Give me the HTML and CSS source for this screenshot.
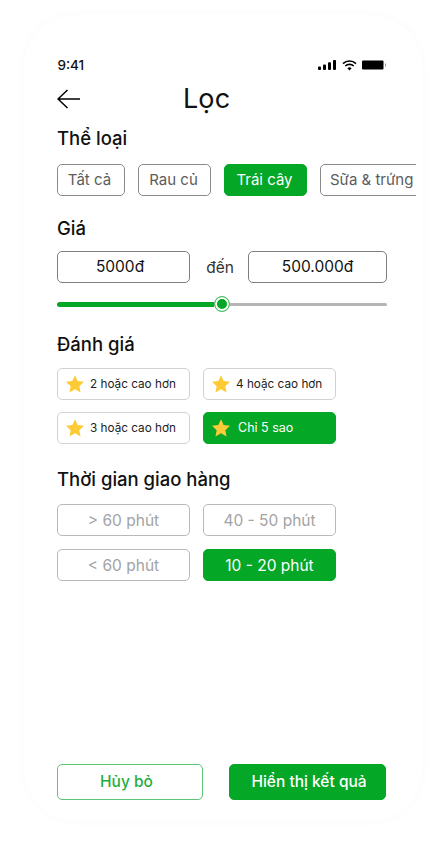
FILE: index.html
```html
<!DOCTYPE html>
<html lang="vi">
<head>
    <meta charset="UTF-8">
    <meta name="viewport" content="width=device-width, initial-scale=1.0">
    <title>Lọc</title>
    <link rel="stylesheet" href="styles.css">
</head>
<body>
    <div class="phone">
        <div class="status-bar">
            <span class="time">9:41</span>
            <div class="status-icons">
                <svg width="18" height="10" viewBox="0 0 18 10"><rect x="0" y="6.5" width="3" height="3.5" rx="1"/><rect x="5" y="4.5" width="3" height="5.5" rx="1"/><rect x="10" y="2.2" width="3" height="7.8" rx="1"/><rect x="15" y="0" width="3" height="10" rx="1"/></svg>
                <svg width="15" height="11" viewBox="0 0 15 11"><path d="M1 3.6a9.4 9.4 0 0 1 13 0" fill="none" stroke="#000" stroke-width="1.7"/><path d="M3.3 6a6 6 0 0 1 8.4 0" fill="none" stroke="#000" stroke-width="1.7"/><path d="M7.5 10.6 5.4 8.2a3 3 0 0 1 4.2 0z"/></svg>
                <svg width="24" height="10" viewBox="0 0 24 10"><rect x="0" y="0.5" width="21.5" height="9" rx="1"/><rect x="23" y="3.5" width="1" height="3" fill="#999"/></svg>
            </div>
        </div>

        <div class="header">
            <svg class="back" width="24" height="20" viewBox="0 0 24 20"><path d="M23 10H1M10.5 1 1 10l9.5 9" fill="none" stroke="#000" stroke-width="1.5"/></svg>
            <h1>Lọc</h1>
        </div>

        <h2 class="first">Thể loại</h2>
        <div class="chips">
            <div class="chip chip-all">Tất cả</div>
            <div class="chip chip-veg">Rau củ</div>
            <div class="chip chip-fruit active">Trái cây</div>
            <div class="chip chip-milk">Sữa &amp; trứng</div>
        </div>

        <h2 class="price-title">Giá</h2>
        <div class="price-row">
            <div class="price-box">5000đ</div>
            <span class="to">đến</span>
            <div class="price-box wide">500.000đ</div>
        </div>
        <div class="slider">
            <div class="slider-fill"></div>
            <div class="slider-thumb"></div>
            <div class="slider-rest"></div>
        </div>

        <h2 class="rating-title">Đánh giá</h2>
        <div class="option-grid">
            <div class="option rating"><svg class="star" viewBox="0 0 24 24"><path d="M12 1.5l3.2 7 7.6.9-5.6 5.2 1.5 7.5L12 18.3l-6.7 3.8 1.5-7.5L1.2 9.4l7.6-.9z"/></svg>2 hoặc cao hơn</div>
            <div class="option rating"><svg class="star" viewBox="0 0 24 24"><path d="M12 1.5l3.2 7 7.6.9-5.6 5.2 1.5 7.5L12 18.3l-6.7 3.8 1.5-7.5L1.2 9.4l7.6-.9z"/></svg>4 hoặc cao hơn</div>
            <div class="option rating"><svg class="star" viewBox="0 0 24 24"><path d="M12 1.5l3.2 7 7.6.9-5.6 5.2 1.5 7.5L12 18.3l-6.7 3.8 1.5-7.5L1.2 9.4l7.6-.9z"/></svg>3 hoặc cao hơn</div>
            <div class="option rating selected"><svg class="star" viewBox="0 0 24 24"><path d="M12 1.5l3.2 7 7.6.9-5.6 5.2 1.5 7.5L12 18.3l-6.7 3.8 1.5-7.5L1.2 9.4l7.6-.9z"/></svg><span class="five">Chỉ 5 sao</span></div>
        </div>

        <h2 class="delivery-title">Thời gian giao hàng</h2>
        <div class="option-grid time-grid">
            <div class="option time-option">&gt; 60 phút</div>
            <div class="option time-option">40 - 50 phút</div>
            <div class="option time-option">&lt; 60 phút</div>
            <div class="option time-option selected">10 - 20 phút</div>
        </div>

        <div class="footer">
            <div class="btn cancel">Hủy bỏ</div>
            <div class="btn apply">Hiển thị kết quả</div>
        </div>
    </div>
</body>
</html>
```

FILE: styles.css
```css
* {
    box-sizing: border-box;
}
html, body {
    margin: 0;
    height: 100%;
}
body {
    background: #ffffff;
    font-family: Inter, "Noto Sans", sans-serif;
    color: #111111;
    padding: 15px 24px 0;
    overflow: hidden;
}
.phone {
    height: 806px;
    padding: 0 0 21px 33px;
    border-radius: 52px;
    background: #ffffff;
    box-shadow: 0 0 12px rgba(0, 0, 0, 0.025);
    display: flex;
    flex-direction: column;
}
.status-bar {
    width: 330px;
    margin-top: 42px;
    height: 16px;
    display: flex;
    justify-content: space-between;
    align-items: center;
}
.time {
    font-size: 13.5px;
    font-weight: 500;
    padding-left: 0.5px;
}
.status-icons {
    display: flex;
    align-items: center;
    gap: 5.5px;
    margin-right: 1px;
}
.header {
    display: flex;
    align-items: center;
    height: 36px;
    margin-top: 7px;
}
.back {
    flex: none;
    margin-top: 2px;
}
h1 {
    margin: 0 0 0 102px;
    font-size: 27px;
    font-weight: 400;
    letter-spacing: 0.1px;
}
h2 {
    margin: 0;
    font-size: 18.5px;
    line-height: 24px;
    font-weight: 500;
}
h2.first {
    margin-top: 10px;
}
.chips {
    width: 359px;
    margin-top: 14px;
    display: flex;
    gap: 13px;
    overflow: hidden;
}
.chip {
    flex: none;
    height: 32px;
    border: 1px solid #8a8a8a;
    border-radius: 5px;
    font-size: 15px;
    line-height: 30px;
    text-align: center;
    color: #5c5c5c;
    white-space: nowrap;
}
.chip-all {
    width: 68px;
    padding-right: 3px;
}
.chip-veg {
    width: 73px;
    padding-right: 2px;
}
.chip-fruit {
    width: 83px;
    padding-right: 2px;
}
.chip-milk {
    width: 104px;
    padding-left: 9px;
    text-align: left;
}
.chip.active {
    background: #04a726;
    border-color: #04a726;
    color: #ffffff;
}
.price-title {
    margin-top: 20px;
}
.price-row {
    width: 330px;
    margin-top: 11px;
    display: flex;
    align-items: center;
}
.price-box {
    width: 133px;
    height: 32px;
    padding-right: 7px;
    border: 1px solid #7f7f7f;
    border-radius: 5px;
    text-align: center;
    font-size: 15.5px;
    line-height: 30px;
}
.price-box.wide {
    width: 139px;
    padding-right: 0;
}
.to {
    flex: 1;
    padding-left: 2px;
    text-align: center;
    font-size: 15.5px;
    color: #333333;
}
.slider {
    width: 330px;
    height: 16px;
    margin-top: 13px;
    display: flex;
    align-items: center;
}
.slider-fill {
    width: 157px;
    height: 5px;
    background: #04a726;
    border-radius: 3px 0 0 3px;
}
.slider-thumb {
    flex: none;
    width: 16px;
    height: 16px;
    border: 1px solid #4fc268;
    border-radius: 50%;
    background: #04a726;
    box-shadow: inset 0 0 0 2px #ffffff;
}
.slider-rest {
    flex: 1;
    height: 3px;
    background: #b5b5b5;
    border-radius: 0 2px 2px 0;
}
.rating-title {
    margin-top: 20px;
}
.option-grid {
    width: 279px;
    margin-top: 12px;
    display: grid;
    grid-template-columns: 133px 133px;
    column-gap: 13px;
    row-gap: 12px;
}
.time-grid {
    margin-top: 13px;
    row-gap: 13px;
}
.option {
    height: 32px;
    border-radius: 5px;
    display: flex;
    align-items: center;
}
.rating {
    border: 1px solid #d2d2d2;
    padding: 0 0 1px 7px;
    gap: 5px;
    font-size: 11.75px;
    color: #222222;
}
.star {
    flex: none;
    width: 20px;
    height: 20px;
    fill: #fdcb35;
}
.five {
    margin-left: 2px;
    font-size: 12.5px;
}
.time-option {
    justify-content: center;
    border: 1px solid #b9b9b9;
    font-size: 15.5px;
    color: #a3a3a3;
}
.option.selected {
    background: #04a726;
    border-color: #04a726;
    color: #ffffff;
}
.delivery-title {
    margin-top: 23px;
}
.footer {
    width: 329px;
    margin-top: auto;
    display: flex;
    justify-content: space-between;
}
.btn {
    height: 36px;
    border-radius: 5px;
    text-align: center;
    font-size: 15.5px;
    font-weight: 500;
    line-height: 33px;
}
.cancel {
    width: 146px;
    padding-right: 7px;
    border: 1px solid #5cc474;
    color: #1fae3e;
}
.apply {
    width: 157px;
    padding-left: 3px;
    border: 1px solid #04a726;
    background: #04a726;
    color: #ffffff;
}
```
